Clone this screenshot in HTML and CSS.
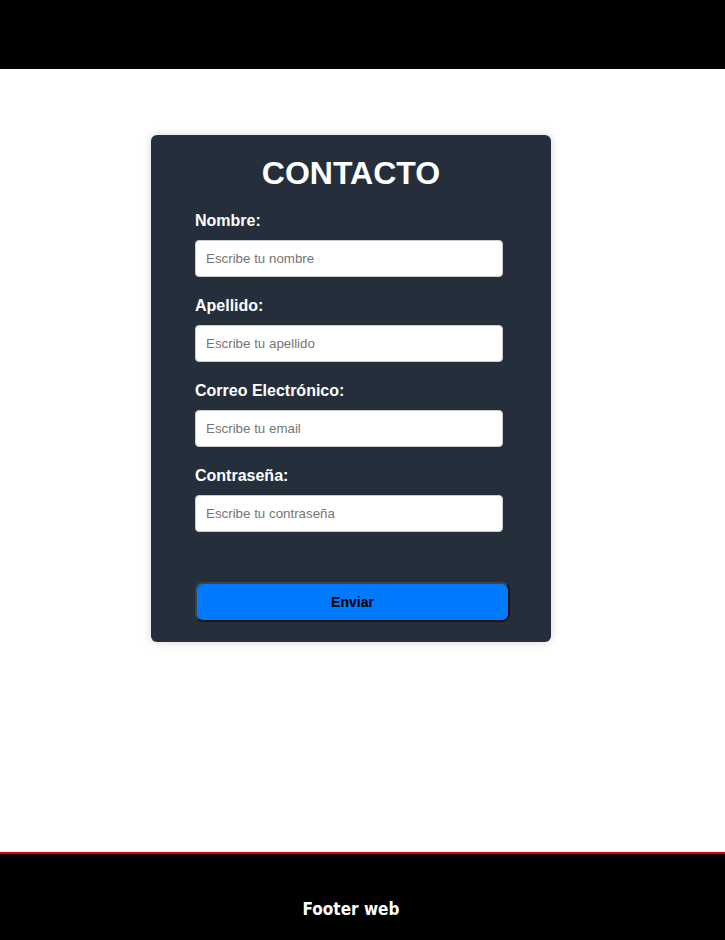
FILE: index.html
```html
<!DOCTYPE html>
<html lang="es">
<head>
<meta charset="utf-8">
<title>Contacto</title>
<link rel="stylesheet" href="styles.css">
</head>
<body>
<header class="site-header"></header>
<main class="site-main">
  <section class="card">
    <h1 class="card-title">CONTACTO</h1>
    <form class="form">
      <div class="field">
        <label class="label" for="nombre">Nombre:</label>
        <input class="input" id="nombre" type="text" placeholder="Escribe tu nombre">
      </div>
      <div class="field">
        <label class="label" for="apellido">Apellido:</label>
        <input class="input" id="apellido" type="text" placeholder="Escribe tu apellido">
      </div>
      <div class="field">
        <label class="label" for="email">Correo Electrónico:</label>
        <input class="input" id="email" type="email" placeholder="Escribe tu email">
      </div>
      <div class="field">
        <label class="label" for="pass">Contraseña:</label>
        <input class="input" id="pass" type="password" placeholder="Escribe tu contraseña">
      </div>
      <button class="button" type="button">Enviar</button>
    </form>
  </section>
</main>
<footer class="site-footer">
  <p class="footer-text">Footer web</p>
</footer>
</body>
</html>
```
FILE: styles.css
```css
* { box-sizing: border-box; }
html, body { margin: 0; padding: 0; }
body {
  font-family: "Liberation Sans", Arial, sans-serif;
  background: #fff;
  min-height: 940px;
  display: flex;
  flex-direction: column;
}
.site-header {
  height: 69px;
  background: #000;
}
.site-main {
  flex: 1;
  display: flex;
  justify-content: center;
  align-items: flex-start;
  padding-top: 66px;
  padding-right: 23px;
}
.card {
  width: 400px;
  background: #252f3c;
  border-radius: 6px;
  box-shadow: 0 0 10px rgba(0,0,0,0.18);
  padding: 20px 44px 20px 44px;
  display: flex;
  flex-direction: column;
}
.card-title {
  margin: 0 0 20px;
  text-align: center;
  color: #fff;
  font-size: 32px;
  font-weight: bold;
  line-height: 37px;
}
.form {
  display: flex;
  flex-direction: column;
}
.field {
  display: flex;
  flex-direction: column;
  margin-bottom: 20px;
}
.label {
  color: #fff;
  font-weight: bold;
  font-size: 16px;
  line-height: 18px;
  margin-bottom: 10px;
}
.input {
  width: 308px;
  height: 37px;
  padding: 10px;
  border: 1px solid #ccc;
  border-radius: 4px;
  background: #fff;
  font-family: "Liberation Sans", Arial, sans-serif;
  font-size: 13.333px;
  color: #000;
}
.input::placeholder { color: #757575; }
.button {
  margin-top: 30px;
  width: 315px;
  height: 40px;
  background: #007bff;
  border: 2px solid #111;
  border-color: #3c4450 #111 #111 #3c4450;
  border-radius: 8px;
  color: #000;
  font-family: "Liberation Sans", Arial, sans-serif;
  font-size: 14px;
  font-weight: bold;
}
.site-footer {
  height: 88px;
  background: #000;
  border-top: 2px solid #e00000;
  display: flex;
  align-items: center;
  justify-content: center;
  padding-top: 24px;
  padding-right: 23px;
}
.footer-text {
  margin: 0;
  color: #fff;
  font-family: "DejaVu Sans Condensed", "DejaVu Sans", sans-serif;
  font-weight: bold;
  font-size: 17px;
}
```
